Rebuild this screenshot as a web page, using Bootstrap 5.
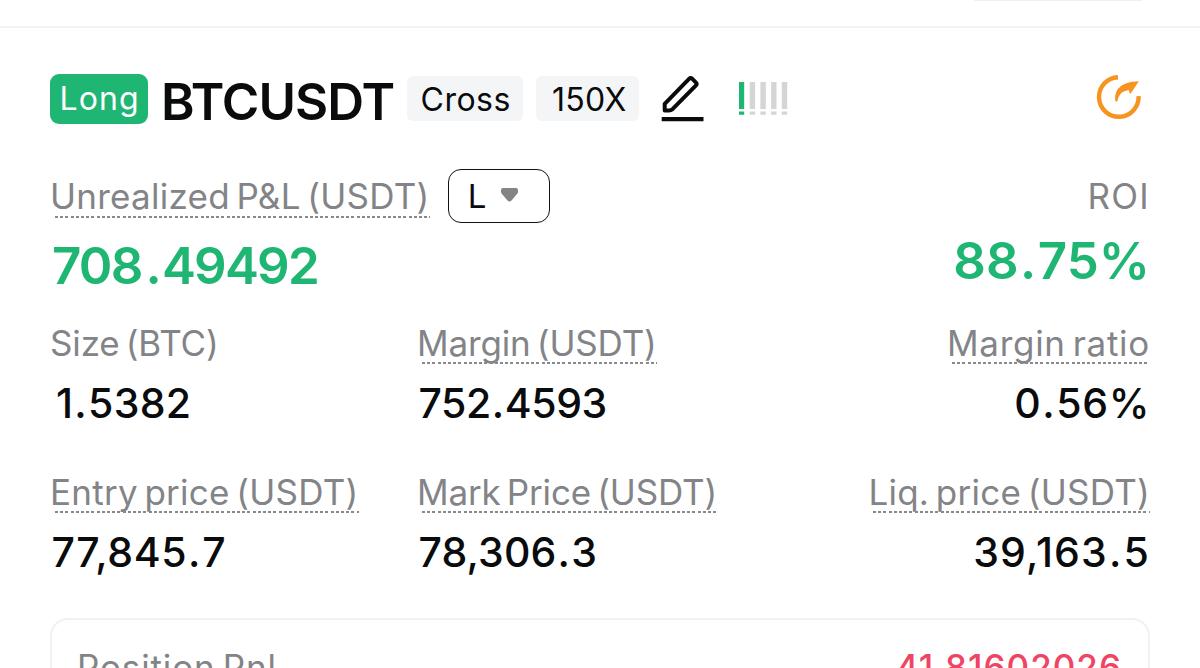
<!DOCTYPE html>
<html lang="en">
<head>
<meta charset="utf-8">
<meta name="viewport" content="width=device-width, initial-scale=1">
<title>BTCUSDT position</title>
<link href="https://cdn.jsdelivr.net/npm/bootstrap@5.3.0/dist/css/bootstrap.min.css" rel="stylesheet">
<style>
  body { font-family: Inter, "Liberation Sans", sans-serif; background: #fff; color: #0a0b0d; height: 668px; overflow: hidden; }
  .top-strip { height: 28px; border-bottom: 2px solid #f2f2f3; }
  .top-tab { width: 168px; height: 1px; margin-right: 58px; background: #f0f0f1; }
  .panel { height: 640px; overflow: hidden; padding: 0 50px; }

  .head { height: 141px; }
  .side-tag { width: 98px; height: 50px; line-height: 50px; border-radius: 9px; background: #1fb573; color: #fff; font-size: 32px; letter-spacing: 1.1px; padding-left: 9.5px; }
  .pair { font-size: 51px; font-weight: 600; line-height: 60px; letter-spacing: -.97px; width: 243px; padding-left: 13px; margin-top: 6px; }
  .tag { height: 45px; line-height: 48px; border-radius: 6px; background: #f4f5f7; font-size: 32px; padding-left: 13.5px; }
  .tag-mode { width: 116px; letter-spacing: .5px; }
  .tag-lev { width: 103px; letter-spacing: .3px; padding-left: 16px; margin-left: 13px; }
  .pen { margin-left: 21px; margin-top: -2px; }
  .risk { margin-left: 33px; }
  .share { margin-right: 7px; margin-top: -3px; }

  .label { position: relative; display: inline-block; font-size: 35px; line-height: 44px; color: #838487; white-space: nowrap; word-spacing: -3.5px; }
  .dotted::after { content: ""; position: absolute; left: 5px; right: 0; bottom: 1px; height: 2px; background: repeating-linear-gradient(90deg, #88898c 0 3px, transparent 3px 5.2px); }
  .pnl-row .dotted::after { bottom: 0; }
  .picker { width: 102px; height: 54px; margin-left: 18px; border: 1.5px solid #111; border-radius: 13px; font-size: 33px; line-height: 50px; padding-left: 19px; }
  .picker svg { margin-left: 15px; margin-top: -2px; }
  .big { font-size: 51px; font-weight: 600; color: #1fb573; white-space: nowrap; }
  .pnl { line-height: 85px; letter-spacing: -1.8px; padding-left: 2px; }
  .pnl .point { margin: 0 2px 0 4px; }
  .roi-box { height: 54px; }
  .roi { line-height: 75px; letter-spacing: 0; }
  .roi .point { margin: 0 1.5px; }
  .value { font-size: 41px; font-weight: 500; line-height: 77px; white-space: nowrap; padding-left: 1.5px; }
  .value .point { margin: 0 1px; }
  .value-size { padding-left: 6px; }
  .pnl-row { height: 151.5px; }
  .stats { display: grid; grid-template-columns: 367px 1fr auto; row-gap: 29px; }
  .stat { height: 120px; }
  .detail { height: 90px; margin-top: 28px; border: 2px solid #f1f1f2; border-radius: 18px; padding: 25px 26px 0 25px; }

  .ls-a { letter-spacing: .25px; }
  .ls-b { letter-spacing: -.15px; }
  .ls-c { letter-spacing: .7px; }
  .ls-d { letter-spacing: .25px; }
  .ls-e { letter-spacing: .3px; }
  .ls-f { letter-spacing: -.45px; }
  .ls-g { letter-spacing: .6px; }
  .ls-h { letter-spacing: .15px; }
  .ls-i { letter-spacing: 1.15px; }
  .ls-j { letter-spacing: 1.3px; }
  .ls-k { letter-spacing: .85px; }
  .loss { color: #ef4565; letter-spacing: 1px; font-weight: 500; }
</style>
</head>
<body>
<div class="top-strip d-flex justify-content-end"><div class="top-tab"></div></div>

<main class="panel">
  <header class="head d-flex align-items-center">
    <span class="side-tag">Long</span>
    <h1 class="pair mb-0">BTCUSDT</h1>
    <span class="tag tag-mode ms-3">Cross</span>
    <span class="tag tag-lev">150X</span>
    <svg class="pen" width="46" height="48" viewBox="0 0 46 48" fill="none" stroke="#0a0b0d">
      <path d="M4.7 36.5V29.8L29.3 4.7Q30.7 3.3 32.1 4.7L36 8.6Q37.4 10 36 11.4L12.5 35.2Q11 36.5 9 36.5Z" stroke-width="4" stroke-linejoin="round"/>
      <path d="M1.7 45.2H43.5" stroke-width="4.2"/>
    </svg>
    <svg class="risk" width="50" height="34" viewBox="0 0 50 34" fill="#d5d5d6">
      <path fill="#1fb573" d="M0 0h5.2v27H0zM0 29.6h5.2v3.2H0z"/>
      <path d="M10.7 0h5.4v27h-5.4zM10.7 29.6h5.4v3.2h-5.4zM21.4 0h5.4v27h-5.4zM21.4 29.6h5.4v3.2h-5.4zM32.1 0h5.4v27h-5.4zM32.1 29.6h5.4v3.2h-5.4zM42.8 0h5.4v27h-5.4zM42.8 29.6h5.4v3.2h-5.4z"/>
    </svg>
    <svg class="share ms-auto" width="48" height="48" viewBox="0 0 48 48">
      <path d="M23 4.2A19.8 19.8 0 1 0 43.6 23.2" fill="none" stroke="#f7931f" stroke-width="4.4"/>
      <path d="M20.5 28.6C18.5 17 26 8.5 43.8 8.3L35.6 20.8Q34.3 20.5 34 17.3C27.5 17.6 23.5 21.5 22.4 28.6Z" fill="#f7931f"/>
    </svg>
  </header>

  <section class="pnl-row d-flex justify-content-between">
    <div>
      <div class="d-flex align-items-center">
        <span class="label dotted ls-a">Unrealized P&amp;L (USDT)</span>
        <span class="picker d-flex align-items-center">L
          <svg width="17" height="14" viewBox="0 0 17 14" fill="#838487"><path d="M2 0H15Q17 0 17 2V4Q17 5 16 6L10.5 12.5Q8.5 14.5 6.5 12.5L1 6Q0 5 0 4V2Q0 0 2 0Z"/></svg>
        </span>
      </div>
      <div class="big pnl">708<span class="point">.</span>49492</div>
    </div>
    <div class="text-end">
      <div class="roi-box d-flex align-items-center justify-content-end"><span class="label ls-j">ROI</span></div>
      <div class="big roi">88<span class="point">.</span>75%</div>
    </div>
  </section>

  <section class="stats">
    <div class="stat"><span class="label ls-b">Size (BTC)</span><div class="value value-size ls-e">1<span class="point">.</span>5382</div></div>
    <div class="stat"><span class="label dotted ls-b">Margin (USDT)</span><div class="value ls-f">752<span class="point">.</span>4593</div></div>
    <div class="stat text-end"><span class="label dotted ls-c">Margin ratio</span><div class="value ls-g">0<span class="point">.</span>56%</div></div>
    <div class="stat"><span class="label dotted ls-d">Entry price (USDT)</span><div class="value ls-g">77,845<span class="point">.</span>7</div></div>
    <div class="stat"><span class="label dotted ls-b">Mark Price (USDT)</span><div class="value ls-h">78,306<span class="point">.</span>3</div></div>
    <div class="stat text-end"><span class="label dotted ls-d">Liq. price (USDT)</span><div class="value ls-i">39,163<span class="point">.</span>5</div></div>
  </section>

  <section class="detail d-flex justify-content-between">
    <span class="label ls-k">Position Pnl</span>
    <span class="label loss">41.81602026</span>
  </section>
</main>
<script src="https://cdn.jsdelivr.net/npm/bootstrap@5.3.0/dist/js/bootstrap.bundle.min.js"></script>
</body>
</html>
